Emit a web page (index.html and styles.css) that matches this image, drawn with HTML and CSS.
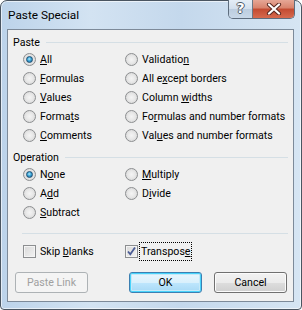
FILE: index.html
```html
<!DOCTYPE html>
<html>
<head>
<meta charset="utf-8">
<link rel="stylesheet" href="styles.css">
</head>
<body>
<div class="window">
  <div class="titlebar">
    <span class="title">Paste Special</span>
    <div class="caption">
      <div class="cap-help">?</div>
      <div class="cap-close">
        <svg width="16" height="12" viewBox="0 0 16 12">
          <path d="M3 1.5 L13 10.5 M13 1.5 L3 10.5" stroke="#5b2a22" stroke-width="4.2" stroke-linecap="round"/>
          <path d="M3 1.5 L13 10.5 M13 1.5 L3 10.5" stroke="#ffffff" stroke-width="2.2" stroke-linecap="round"/>
        </svg>
      </div>
    </div>
  </div>
  <div class="client">
    <div class="group-head"><span>Paste</span><i class="rule"></i></div>
    <div class="grid paste">
      <label class="opt"><span class="radio on"></span><span><u>A</u>ll</span></label>
      <label class="opt"><span class="radio"></span><span>Validatio<u>n</u></span></label>
      <label class="opt"><span class="radio"></span><span><u>F</u>ormulas</span></label>
      <label class="opt"><span class="radio"></span><span>All e<u>x</u>cept borders</span></label>
      <label class="opt"><span class="radio"></span><span><u>V</u>alues</span></label>
      <label class="opt"><span class="radio"></span><span>Column <u>w</u>idths</span></label>
      <label class="opt"><span class="radio"></span><span>Forma<u>t</u>s</span></label>
      <label class="opt"><span class="radio"></span><span>Fo<u>r</u>mulas and number formats</span></label>
      <label class="opt"><span class="radio"></span><span><u>C</u>omments</span></label>
      <label class="opt"><span class="radio"></span><span>Val<u>u</u>es and number formats</span></label>
    </div>
    <div class="group-head op"><span>Operation</span><i class="rule"></i></div>
    <div class="grid">
      <label class="opt"><span class="radio on"></span><span>N<u>o</u>ne</span></label>
      <label class="opt"><span class="radio"></span><span><u>M</u>ultiply</span></label>
      <label class="opt"><span class="radio"></span><span>A<u>d</u>d</span></label>
      <label class="opt"><span class="radio"></span><span>D<u>i</u>vide</span></label>
      <label class="opt"><span class="radio"></span><span><u>S</u>ubtract</span></label>
    </div>
    <div class="sep"></div>
    <div class="grid checks">
      <label class="opt"><span class="check"></span><span class="lbl">Skip <u>b</u>lanks</span></label>
      <label class="opt"><span class="check on">
        <svg width="11" height="11" viewBox="0 0 11 11"><path d="M2 5.5 L4.3 8.3 L9 1.5" fill="none" stroke="#4b5c95" stroke-width="1.8"/></svg>
      </span><span class="lbl focus">Transpos<u>e</u></span></label>
    </div>
    <div class="buttons">
      <div class="btn disabled">Paste Link</div>
      <div class="right">
        <div class="btn default">OK</div>
        <div class="btn">Cancel</div>
      </div>
    </div>
  </div>
</div>
</body>
</html>
```

FILE: styles.css
```css
html, body {
  margin: 0;
  padding: 0;
  background: #ffffff;
}
body {
  font-family: "Roboto", "Open Sans", "DejaVu Sans", sans-serif;
  font-size: 10.6px;
  color: #000;
}
.window {
  width: 302px;
  height: 310px;
  box-sizing: border-box;
  border: 1px solid #4a5561;
  border-radius: 7px 7px 4px 4px;
  background: linear-gradient(90deg, #bcd3ea 0%, #d3e3f2 30%, #c4d8ec 60%, #d6e5f3 100%);
  padding: 0 7px 7px 6px;
  display: flex;
  flex-direction: column;
  box-shadow: inset 0 0 0 1px rgba(255,255,255,0.6);
}
.titlebar {
  height: 28px;
  display: flex;
  justify-content: space-between;
  align-items: flex-start;
  position: relative;
}
.title {
  font-size: 11.8px;
  margin-top: 7px;
  margin-left: 1px;
  color: #000;
}
.caption {
  display: flex;
  margin-right: -1px;
  margin-top: -1px;
  height: 18px;
  border: 1px solid #5e6d7e;
  border-top: none;
  border-radius: 0 0 5px 5px;
  overflow: hidden;
}
.cap-help {
  width: 24px;
  height: 18px;
  box-sizing: border-box;
  background: linear-gradient(#e4edf6 0%, #d2dfec 50%, #bccddf 51%, #c9d8e8 100%);
  border-right: 1px solid #6b7785;
  color: #fff;
  font: bold 14px "DejaVu Sans", sans-serif;
  text-align: center;
  line-height: 17px;
  text-shadow: -1px 0 #4d5966, 1px 0 #4d5966, 0 -1px #4d5966, 0 1px #4d5966;
}
.cap-close {
  width: 41px;
  height: 18px;
  background: linear-gradient(#e6a796 0%, #d8826c 45%, #c34a31 50%, #d66a4e 100%);
  display: flex;
  align-items: center;
  justify-content: center;
}
.client {
  flex: 1;
  background: #f0f0f0;
  border: 1px solid #7d8a99;
  padding: 5px 5px 0 5px;
  display: flex;
  flex-direction: column;
}
.group-head {
  height: 15px;
  display: flex;
  align-items: center;
  gap: 6px;
  margin-right: 0;
}
.group-head span {
  line-height: 15px;
}
.group-head .rule {
  flex: 1;
  height: 1px;
  background: #d5dfe5;
  margin-top: -1px;
}
.group-head.op {
  margin-top: 5px;
}
.grid {
  display: grid;
  grid-template-columns: 102px auto;
  grid-auto-rows: 19px;
  padding-left: 10px;
}
.opt {
  display: flex;
  align-items: center;
  gap: 4px;
  white-space: nowrap;
}
u {
  text-decoration: underline;
  text-underline-offset: 1px;
}
.radio {
  width: 13px;
  height: 13px;
  box-sizing: border-box;
  border-radius: 50%;
  border: 1px solid #8c8e90;
  background: radial-gradient(circle at 50% 50%, #f4f4f4 0%, #e8e8e8 45%, #d0d0d0 100%);
  position: relative;
  flex: none;
}
.radio.on::after {
  content: "";
  position: absolute;
  left: 2px;
  top: 2px;
  width: 7px;
  height: 7px;
  box-sizing: border-box;
  border-radius: 50%;
  border: 1px solid #1f4f73;
  background: radial-gradient(circle at 45% 40%, #b9eafc 0%, #3aa6d8 45%, #1b5f8e 100%);
}
.sep {
  height: 1px;
  background: #d5dfe5;
  margin: 11px 0 0 9px;
}
.checks {
  margin-top: 8px;
  grid-auto-rows: 18px;
}
.check {
  width: 13px;
  height: 13px;
  box-sizing: border-box;
  border: 1px solid #8c8e90;
  background: linear-gradient(135deg, #d9d9d9 0%, #f2f2f2 100%);
  box-shadow: inset 0 0 0 1px #f4f4f4;
  flex: none;
  display: flex;
  align-items: center;
  justify-content: center;
}
.check svg { display: block; }
.lbl.focus {
  outline: 1px dotted #000;
  outline-offset: 0;
  padding: 2px 1px 2px 1px;
  margin-left: -2px;
}
.buttons {
  margin-top: 12px;
  display: flex;
  justify-content: space-between;
  padding-left: 2px;
  padding-right: 1px;
}
.right {
  display: flex;
  gap: 12px;
}
.btn {
  width: 73px;
  height: 21px;
  box-sizing: border-box;
  border: 1px solid #707070;
  border-radius: 3px;
  background: linear-gradient(#f2f2f2 0%, #ebebeb 50%, #dddddd 51%, #cfcfcf 100%);
  box-shadow: inset 0 0 0 1px #fbfbfb;
  display: flex;
  align-items: center;
  justify-content: center;
  font-size: 10.6px;
}
.btn.default {
  border-color: #3c7fb1;
  box-shadow: inset 0 0 0 1px #48d3fb, inset 0 0 0 2px #c6e9f8;
  background: linear-gradient(#eaf6fd 0%, #d9f0fc 50%, #bee6fd 51%, #a7d9f5 100%);
}
.btn.disabled {
  border-color: #adb2b5;
  background: #f4f4f4;
  box-shadow: none;
  color: #a0a0a0;
}
```
